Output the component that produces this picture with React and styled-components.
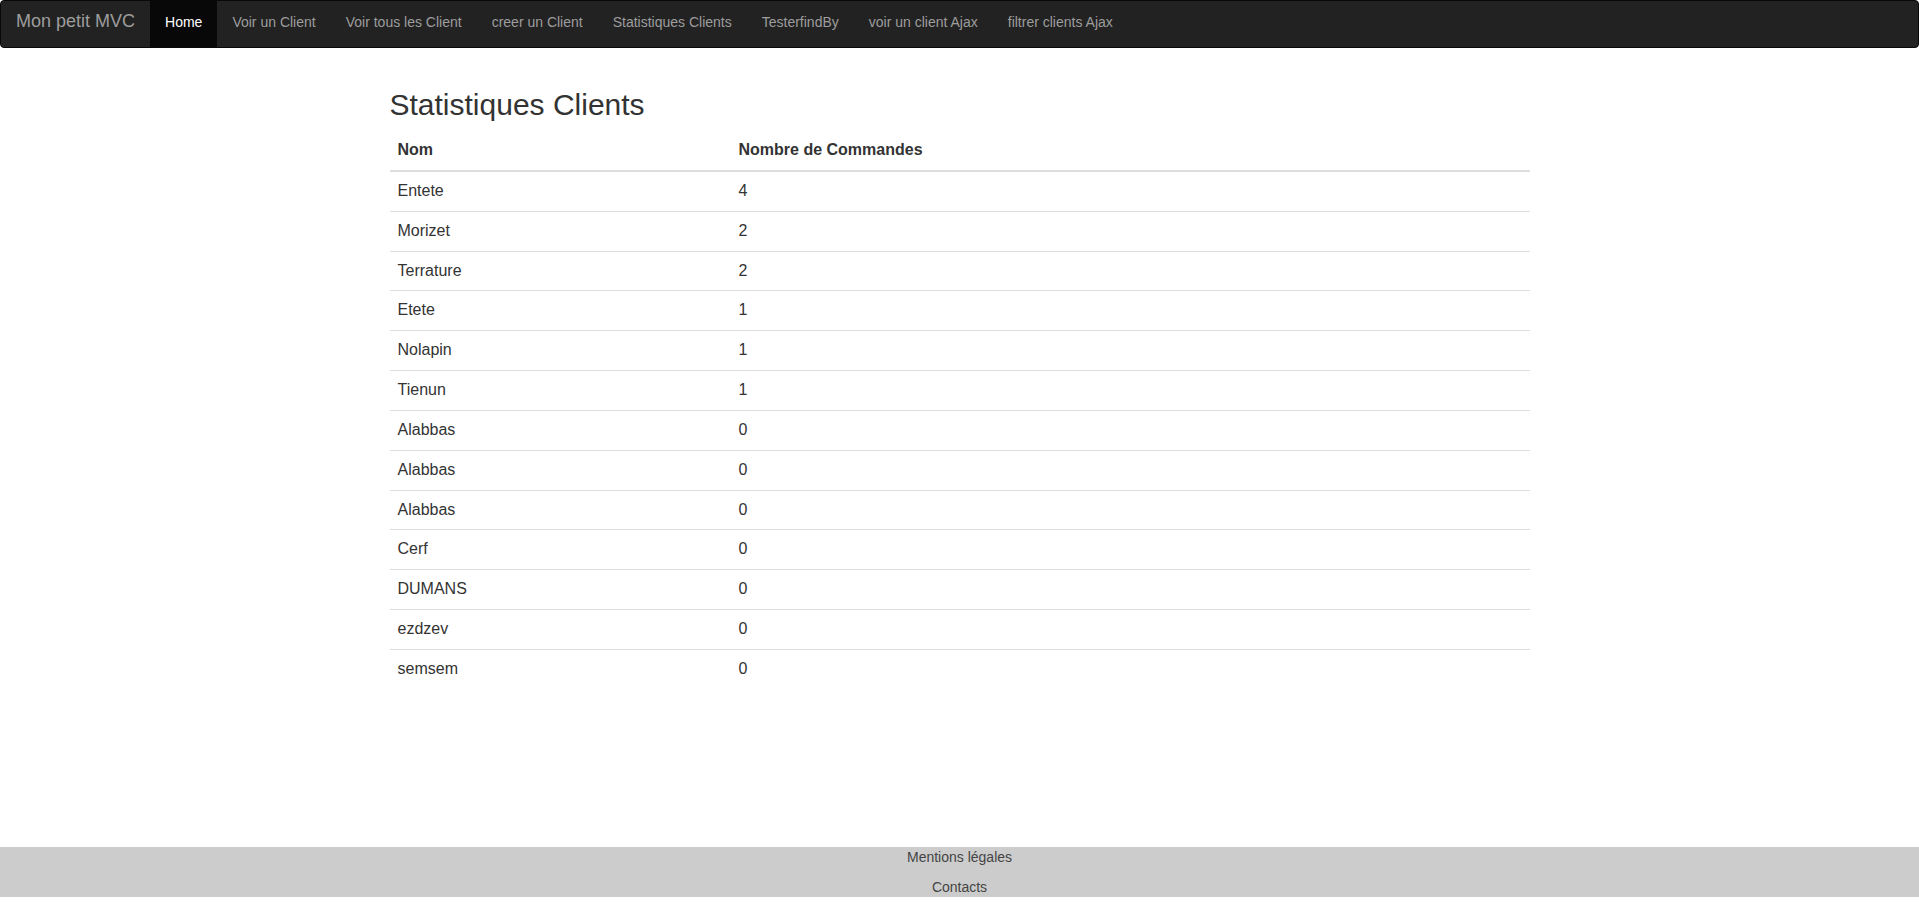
import styled, { createGlobalStyle } from "styled-components";

const GlobalStyle = createGlobalStyle`
  html, body {
    margin: 0;
    padding: 0;
  }
  body {
    font-family: "Liberation Sans", Arial, Helvetica, sans-serif;
    font-size: 14px;
    line-height: 1.42857;
    color: #333;
    background: #fff;
  }
  * {
    box-sizing: border-box;
  }
`;

const menu = [
  "Voir un Client",
  "Voir tous les Client",
  "creer un Client",
  "Statistiques Clients",
  "TesterfindBy",
  "voir un client Ajax",
  "filtrer clients Ajax",
];

const clients = [
  ["Entete", 4],
  ["Morizet", 2],
  ["Terrature", 2],
  ["Etete", 1],
  ["Nolapin", 1],
  ["Tienun", 1],
  ["Alabbas", 0],
  ["Alabbas", 0],
  ["Alabbas", 0],
  ["Cerf", 0],
  ["DUMANS", 0],
  ["ezdzev", 0],
  ["semsem", 0],
];

//page frame
const Page = styled.div`
  min-height: 100vh;
  display: flex;
  flex-direction: column;
`;

//navbar
const Navbar = styled.nav`
  display: flex;
  align-items: stretch;
  height: 48px;
  background: #222;
  border: 1px solid #080808;
  border-radius: 4px;
`;

const Brand = styled.a`
  display: block;
  padding: 10px 15px 0;
  font-size: 18px;
  line-height: 20px;
  color: #9d9d9d;
  text-decoration: none;
`;

const NavList = styled.ul`
  display: flex;
  margin: 0;
  padding: 0;
  list-style: none;
`;

const NavLink = styled.a`
  display: block;
  height: 100%;
  padding: 11px 15px 0;
  line-height: 20px;
  font-size: 14px;
  text-decoration: none;
  color: ${(p) => (p.$active ? "#fff" : "#9d9d9d")};
  background: ${(p) => (p.$active ? "#080808" : "transparent")};
`;

//content
const Container = styled.main`
  width: 1170px;
  margin: 0 auto;
  padding: 40px 15px 0;
`;

const Title = styled.h2`
  margin: 0 0 10px;
  font-size: 30px;
  font-weight: 500;
  line-height: 1.1;
  color: #333;
`;

const Table = styled.table`
  width: 100%;
  border-collapse: collapse;
  border-spacing: 0;
  font-size: 16px;
`;

const Th = styled.th`
  width: ${(p) => p.$width || "auto"};
  padding: 8px;
  text-align: left;
  font-weight: bold;
  line-height: 1.42857;
  border-bottom: 2px solid #ddd;
`;

const Td = styled.td`
  padding: 8px;
  line-height: 1.42857;
  border-top: 1px solid #ddd;
`;

const Row = styled.tr`
  &:first-child td {
    border-top: 0;
  }
`;

//footer
const Footer = styled.footer`
  margin-top: auto;
  margin-bottom: 7px;
  display: flex;
  flex-direction: column;
  align-items: center;
  gap: 10px;
  background: #ccc;
`;

const FooterLink = styled.a`
  font-size: 14px;
  line-height: 20px;
  color: #444;
  text-decoration: none;
`;

export default function App() {
  return (
    <>
      <GlobalStyle />
      <Page>
        <Navbar>
          <Brand href='#'>Mon petit MVC</Brand>
          <NavList>
            <li>
              <NavLink href='#' $active>
                Home
              </NavLink>
            </li>
            {menu.map((item) => (
              <li key={item}>
                <NavLink href='#'>{item}</NavLink>
              </li>
            ))}
          </NavList>
        </Navbar>

        <Container>
          <Title>Statistiques Clients</Title>
          <Table>
            <thead>
              <tr>
                <Th $width='341px'>Nom</Th>
                <Th>Nombre de Commandes</Th>
              </tr>
            </thead>
            <tbody>
              {clients.map(([nom, nb], i) => (
                <Row key={i}>
                  <Td>{nom}</Td>
                  <Td>{nb}</Td>
                </Row>
              ))}
            </tbody>
          </Table>
        </Container>

        <Footer>
          <FooterLink href='#'>Mentions légales</FooterLink>
          <FooterLink href='#'>Contacts</FooterLink>
        </Footer>
      </Page>
    </>
  );
}
